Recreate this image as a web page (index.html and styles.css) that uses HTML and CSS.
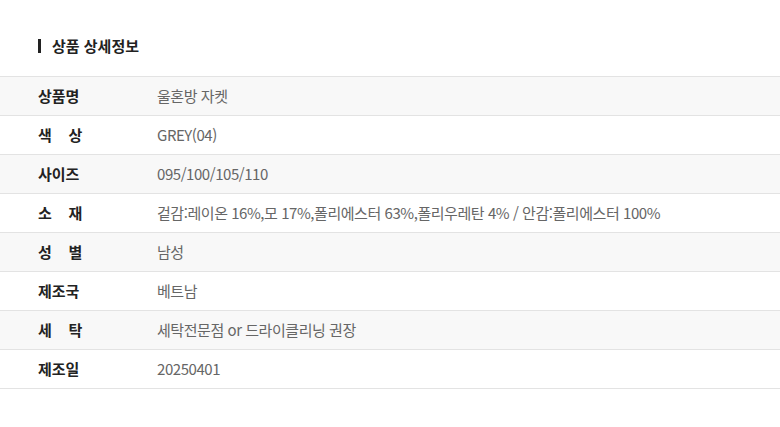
FILE: index.html
```html
<!DOCTYPE html>
<html lang="ko">
<head>
<meta charset="utf-8">
<link rel="stylesheet" href="styles.css">
</head>
<body>
<div class="page">
  <h2 class="title"><span class="bar"></span>상품 상세정보</h2>
  <div class="table">
    <div class="row alt"><div class="label">상품명</div><div class="value">울혼방 자켓</div></div>
    <div class="row"><div class="label">색&nbsp;&nbsp;&nbsp;&nbsp;상</div><div class="value">GREY(04)</div></div>
    <div class="row alt"><div class="label">사이즈</div><div class="value">095/100/105/110</div></div>
    <div class="row"><div class="label">소&nbsp;&nbsp;&nbsp;&nbsp;재</div><div class="value">겉감:레이온 16%,모 17%,폴리에스터 63%,폴리우레탄 4% / 안감:폴리에스터 100%</div></div>
    <div class="row alt"><div class="label">성&nbsp;&nbsp;&nbsp;&nbsp;별</div><div class="value">남성</div></div>
    <div class="row"><div class="label">제조국</div><div class="value">베트남</div></div>
    <div class="row alt"><div class="label">세&nbsp;&nbsp;&nbsp;&nbsp;탁</div><div class="value">세탁전문점 or 드라이클리닝 권장</div></div>
    <div class="row"><div class="label">제조일</div><div class="value">20250401</div></div>
  </div>
</div>
</body>
</html>
```
FILE: styles.css
```css
html, body {
  margin: 0;
  padding: 0;
  background: #fff;
}
.page {
  font-family: "Noto Sans CJK KR", "Noto Sans", sans-serif;
  padding-top: 36px;
}
.title {
  margin: 0 0 20px 38px;
  display: flex;
  align-items: center;
  gap: 11px;
  font-size: 15px;
  font-weight: 700;
  color: #222;
  height: 20px;
  line-height: 20px;
}
.bar {
  width: 3px;
  height: 14px;
  background: #222;
}
.table {
  border-bottom: 1px solid #e3e3e3;
}
.row {
  display: flex;
  align-items: center;
  box-sizing: border-box;
  height: 39px;
  padding-bottom: 2px;
  border-top: 1px solid #e3e3e3;
  font-size: 15px;
}
.row.alt {
  background: #f8f8f8;
}
.label {
  width: 119px;
  padding-left: 38px;
  font-weight: 700;
  color: #222;
  white-space: pre;
}
.value {
  color: #666;
  letter-spacing: -0.45px;
}
```
